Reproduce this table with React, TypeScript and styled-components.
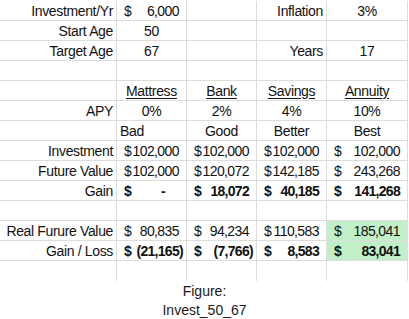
import styled, { createGlobalStyle } from "styled-components";
import { FC, ReactNode } from "react";

const GlobalStyle = createGlobalStyle`
    html, body {
        margin: 0;
        padding: 0;
        background: #ffffff;
    }
    body {
        font-family: "Liberation Sans", Arial, sans-serif;
        color: #111111;
    }
`;

const Page = styled['div']`
    width: 409px;
    height: 319px;
    overflow: hidden;
    display: flex;
    flex-direction: column;
`;

const Sheet = styled['div']`
    display: grid;
    grid-template-columns: 117px 70px 70px 70px 81px;
    grid-auto-rows: 20px;
    width: 408px;
    padding-top: 1px;
    font-size: 14px;
    letter-spacing: -0.35px;
`;

type Align = "left" | "center" | "right";

const Cell = styled['div']<{ $align?: Align; $bold?: boolean; $fill?: string; $last?: boolean }>`
    box-sizing: border-box;
    border-right: 1px solid #dcdcdc;
    border-bottom: ${p => p.$last ? "none" : "1px solid #dcdcdc"};
    background: ${p => p.$fill ?? "transparent"};
    display: flex;
    align-items: center;
    justify-content: ${p => p.$align === "left" ? "flex-start" : p.$align === "center" ? "center" : "flex-end"};
    padding: 0 3px;
    font-weight: ${p => p.$bold ? 700 : 400};
    white-space: nowrap;
    overflow: hidden;
`;

const AcctCell = styled(Cell)`
    justify-content: space-between;
    letter-spacing: ${p => p.$bold ? "-0.7px" : "-0.6px"};
`;

const Ghost = styled['span']`
    visibility: hidden;
`;

const Header = styled['span']`
    text-decoration: underline;
    text-underline-offset: 2px;
`;

const Caption = styled['div']`
    margin-top: 1px;
    display: flex;
    flex-direction: column;
    align-items: center;
    font-size: 14px;
    line-height: 19px;
    color: #1a1a1a;
`;

const GREEN = "#c1f0c8";

interface IAcct {
    value: string;
    bold?: boolean;
    fill?: string;
}

// accounting format: "$" pinned left, number right, ")" space kept for positives
const Acct: FC<IAcct> = ({ value, bold, fill }) => {
    const negative = value.startsWith("(");
    const zero = value === "-";
    return (
        <AcctCell $bold={bold} $fill={fill}>
            <span><Ghost>(</Ghost>$</span>
            <span>
                {value}
                {zero ? <Ghost>00)</Ghost> : !negative && <Ghost>)</Ghost>}
            </span>
        </AcctCell>
    );
};

interface IText {
    children?: ReactNode;
    align?: Align;
    last?: boolean;
}

const Txt: FC<IText> = ({ children, align = "right", last }) => (
    <Cell $align={align} $last={last}>{children}</Cell>
);

const Empty: FC<{ last?: boolean }> = ({ last }) => <Cell $last={last} />;

const App: FC = () => {
    return (
        <Page>
            <GlobalStyle />
            <Sheet>
                <Txt>Investment/Yr</Txt>
                <Acct value="6,000" />
                <Empty />
                <Txt>Inflation</Txt>
                <Txt align="center">3%</Txt>

                <Txt>Start Age</Txt>
                <Txt align="center">50</Txt>
                <Empty />
                <Empty />
                <Empty />

                <Txt>Target Age</Txt>
                <Txt align="center">67</Txt>
                <Empty />
                <Txt>Years</Txt>
                <Txt align="center">17</Txt>

                <Empty /><Empty /><Empty /><Empty /><Empty />

                <Empty />
                <Txt align="center"><Header>Mattress</Header></Txt>
                <Txt align="center"><Header>Bank</Header></Txt>
                <Txt align="center"><Header>Savings</Header></Txt>
                <Txt align="center"><Header>Annuity</Header></Txt>

                <Txt>APY</Txt>
                <Txt align="center">0%</Txt>
                <Txt align="center">2%</Txt>
                <Txt align="center">4%</Txt>
                <Txt align="center">10%</Txt>

                <Empty />
                <Txt align="left">Bad</Txt>
                <Txt align="center">Good</Txt>
                <Txt align="center">Better</Txt>
                <Txt align="center">Best</Txt>

                <Txt>Investment</Txt>
                <Acct value="102,000" />
                <Acct value="102,000" />
                <Acct value="102,000" />
                <Acct value="102,000" />

                <Txt>Future Value</Txt>
                <Acct value="102,000" />
                <Acct value="120,072" />
                <Acct value="142,185" />
                <Acct value="243,268" />

                <Txt>Gain</Txt>
                <Acct value="-" bold />
                <Acct value="18,072" bold />
                <Acct value="40,185" bold />
                <Acct value="141,268" bold />

                <Empty /><Empty /><Empty /><Empty /><Empty />

                <Txt>Real Furure Value</Txt>
                <Acct value="80,835" />
                <Acct value="94,234" />
                <Acct value="110,583" />
                <Acct value="185,041" fill={GREEN} />

                <Txt>Gain / Loss</Txt>
                <Acct value="(21,165)" bold />
                <Acct value="(7,766)" bold />
                <Acct value="8,583" bold />
                <Acct value="83,041" bold fill={GREEN} />

                <Empty last /><Empty last /><Empty last /><Empty last /><Empty last />
            </Sheet>
            <Caption>
                <span>Figure:</span>
                <span>Invest_50_67</span>
            </Caption>
        </Page>
    );
};

export default App;
